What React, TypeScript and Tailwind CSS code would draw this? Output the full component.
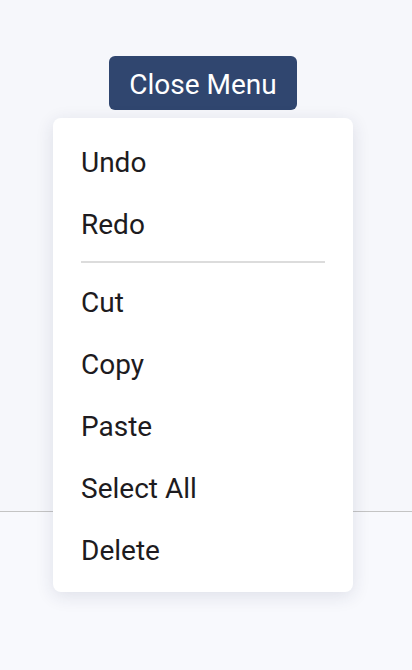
const items = [["Undo", "Redo"], ["Cut", "Copy", "Paste", "Select All", "Delete"]];

export default function App() {
  return (
    <main className="min-h-screen bg-[#f8f9fd] font-['Roboto',sans-serif]">
      <section className="h-[512px] border-b border-[#c4c4c4] bg-[#f6f7fb]">
        <div className="flex flex-col items-center pt-[56px] pr-[6px]">
          <div className="relative">
            <button className="h-[54px] rounded-md bg-[#30466f] px-5 pt-[3px] text-[28px] leading-none text-white">
              Close Menu
            </button>

            <div className="absolute left-1/2 top-[62px] z-10 w-[300px] -translate-x-1/2 rounded-lg bg-white py-3 shadow-[0_4px_18px_rgba(30,40,80,0.12)]">
              {items.map((group, i) => (
                <div key={i}>
                  {i > 0 ? <div className="mx-7 my-[7px] h-[2px] bg-[#dcdcdc]" /> : null}
                  {group.map((label) => (
                    <div
                      key={label}
                      className="flex h-[62px] items-center px-7 pt-1 text-[28px] text-[#1d1b20]"
                    >
                      {label}
                    </div>
                  ))}
                </div>
              ))}
            </div>
          </div>
        </div>
      </section>
    </main>
  );
}
